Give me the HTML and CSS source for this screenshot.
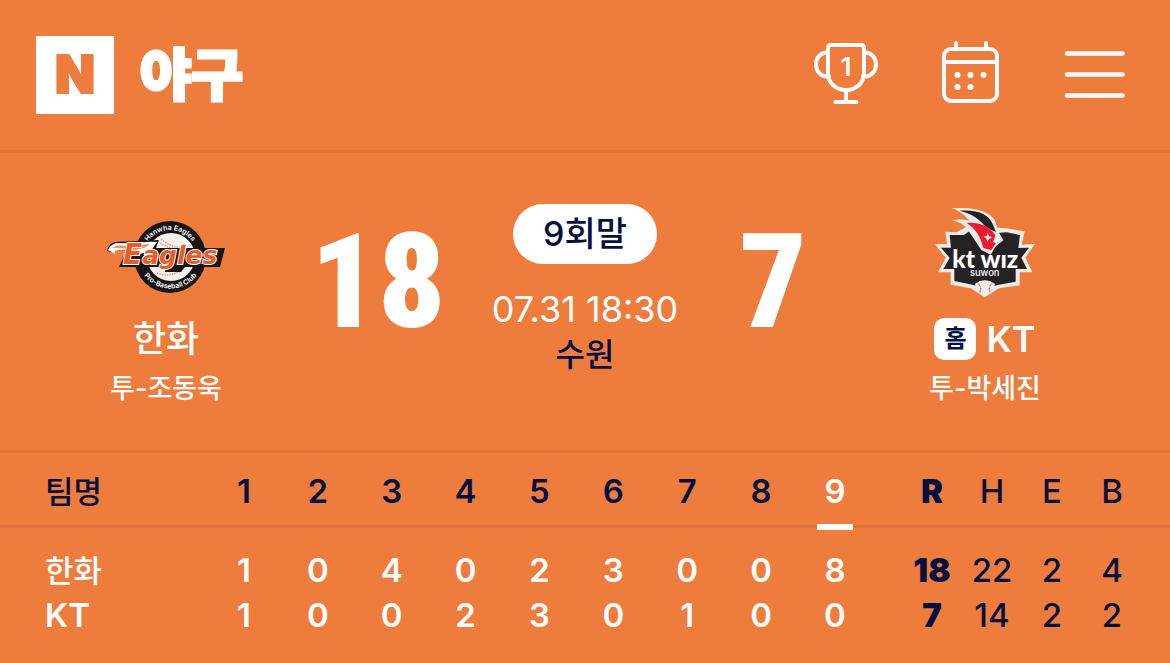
FILE: index.html
```html
<!DOCTYPE html>
<html lang="ko">
<head>
    <meta charset="UTF-8">
    <meta name="viewport" content="width=device-width, initial-scale=1.0">
    <title>야구</title>
    <link rel="stylesheet" href="styles.css">
</head>
<body>

<!-- Header -->
<header class="header">
    <a class="brand" href="#">
        <span class="brand-mark">N</span>
        <span class="brand-name">야구</span>
    </a>
    <nav class="header-menu">
        <button type="button" class="icon-btn" aria-label="순위">
            <svg width="64" height="64" viewBox="0 0 64 64" fill="none" stroke="#fff" stroke-width="4" stroke-linecap="round" stroke-linejoin="round">
                <path d="M14 8q0-3 3-3h30q3 0 3 3v25c0 10-8 17-18 17s-18-7-18-17z"/>
                <path d="M14 12.500h-1c-6 0-11 5-11 12s5 12 11 12h2M50 12.500h1c6 0 11 5 11 12s-5 12-11 12h-2M32 50v12M21.500 62h21"/>
                <text class="trophy-number" x="32" y="36" text-anchor="middle">1</text>
            </svg>
        </button>
        <button type="button" class="icon-btn" aria-label="일정">
            <svg width="64" height="64" viewBox="0 0 64 64" fill="none" stroke="#fff" stroke-width="4" stroke-linecap="round">
                <rect x="6" y="9" width="53" height="52" rx="7"/>
                <path d="M6 22h53M18 3v5M48 3v5"/>
                <g fill="#fff" stroke="none">
                    <circle cx="19.500" cy="35" r="3"/>
                    <circle cx="32.500" cy="35" r="3"/>
                    <circle cx="45.500" cy="35" r="3"/>
                    <circle cx="19.500" cy="47" r="3"/>
                    <circle cx="32.500" cy="47" r="3"/>
                </g>
            </svg>
        </button>
        <button type="button" class="icon-btn" aria-label="메뉴">
            <svg width="64" height="64" viewBox="0 0 64 64" stroke="#fff" stroke-width="4.500" stroke-linecap="round">
                <path d="M5 13.500h55.500M5 34.500h55.500M5 55.500h55.500"/>
            </svg>
        </button>
    </nav>
</header>

<main>
    <!-- Match summary -->
    <section class="match">
        <div class="team">
            <svg class="team-logo" viewBox="106 208 120 90" role="img" aria-label="Hanwha Eagles">
                <circle cx="170" cy="257" r="36" fill="#171415"/>
                <circle cx="171" cy="257" r="24" fill="#f6f1ec"/>
                <path d="M161 239q8 7 18 8M160 243q9 6 20 6M157 273q13 5 25-3" fill="none" stroke="#ed9a80" stroke-width="1.500" stroke-dasharray="1.500 1"/>
                <path id="arc-top" d="M143 257a27 27 0 0 1 54 0" fill="none"/>
                <path id="arc-bottom" d="M137 255a33.500 33.500 0 0 0 67 0" fill="none"/>
                <text class="logo-arc"><textPath href="#arc-top" startOffset="50%" text-anchor="middle">Hanwha Eagles</textPath></text>
                <text class="logo-arc"><textPath href="#arc-bottom" startOffset="50%" text-anchor="middle">Pro-Baseball Club</textPath></text>
                <path d="M107 251q1-7 8-9l44-2-3 8h69l-5 19h-35l-4 5h-16l1-5h-47l7-15q-3-4-7-5-6-1-8 1v4z" fill="#171415"/>
                <path d="M108 250q2-5 8-7 11 0 20 1 9-3 21-2l-6 9-18 5q-3-5-8-6-6-1-10 1v3z" fill="#fff"/>
                <path d="M112 248q6-4 12-2l26-2q-5 5-16 6l-8-1q-7-2-14-1z" fill="#f58a58"/>
                <text class="logo-eagles" x="123" y="264">E<tspan class="logo-agles">agles</tspan></text>
            </svg>
            <div class="team-name">한화</div>
            <div class="pitcher">투-조동욱</div>
        </div>

        <div class="score">18</div>

        <div class="status">
            <div class="inning">9회말</div>
            <div class="date">07.31 18:30</div>
            <div class="stadium">수원</div>
        </div>

        <div class="score">7</div>

        <div class="team">
            <svg class="team-logo" viewBox="18 25 360 270" role="img" aria-label="kt wiz suwon">
                <path d="M48 133l36 1-5-38 33 2 45-24 80 10 25 2 55 9-9 40 40-2-29 40 21 45h-38v39l-62 9-43 27-42-27-60-11v-37H57l23-43z" fill="#eeeae8"/>
                <path d="M66 144h30l-4-38h43l28-20 72 14 27-2 41 8-5 39 32-1-23 30 17 34h-34v38l-50 9-43 10-37-10-54-11v-36H73l19-33z" fill="#242222"/>
                <path d="M98 25c60-3 108 6 129 36l15 42 11 19-22 17-16 26-28-14-38-57c-14-20-29-28-51-32 20-3 37-3 53 1-17-20-32-30-53-38z" fill="#eeeae8"/>
                <path d="M122 33c60-3 88 13 100 42l9 22c-12-5-23-10-34-19-20-23-40-36-75-45z" fill="#242222"/>
                <path d="M143 70c35-3 69 9 86 37l-3 11 24 6-19 6-15 22-23-7c-8-34-24-59-50-75z" fill="#ed1b2f"/>
                <path d="M206 100l4 10 10 3-10 4-5 10-3-11-8-5 9-2z" fill="#fff"/>
                <path d="M228 116l22 8-19 6-10-3z" fill="#fff"/>
                <path d="M168 252q29-20 60 0-3 22-31 38-26-16-29-38z" fill="#f2eeec"/>
                <path d="M175 248q16 15 7 31M221 248q-16 15-7 31" fill="none" stroke="#d9505a" stroke-width="4" stroke-dasharray="3 2"/>
                <text class="logo-wiz" x="199" y="204" text-anchor="middle">kt wız</text>
                <text class="logo-city" x="197" y="228" text-anchor="middle">suwon</text>
            </svg>
            <div class="team-name"><span class="home-badge">홈</span><span class="latin">KT</span></div>
            <div class="pitcher">투-박세진</div>
        </div>
    </section>

    <!-- Score by inning -->
    <table class="scoreboard">
        <colgroup>
            <col class="col-team">
            <col span="9">
            <col class="col-run">
            <col class="col-stat" span="2">
            <col class="col-last">
        </colgroup>
        <thead>
        <tr>
            <th>팀명</th>
            <th>1</th>
            <th>2</th>
            <th>3</th>
            <th>4</th>
            <th>5</th>
            <th>6</th>
            <th>7</th>
            <th>8</th>
            <th class="current">9</th>
            <th class="run">R</th>
            <th class="stat">H</th>
            <th class="stat">E</th>
            <th class="stat last">B</th>
        </tr>
        </thead>
        <tbody>
        <tr>
            <th>한화</th>
            <td>1</td>
            <td>0</td>
            <td>4</td>
            <td>0</td>
            <td>2</td>
            <td>3</td>
            <td>0</td>
            <td>0</td>
            <td>8</td>
            <td class="run">18</td>
            <td class="stat">22</td>
            <td class="stat">2</td>
            <td class="stat last">4</td>
        </tr>
        <tr>
            <th class="latin">KT</th>
            <td>1</td>
            <td>0</td>
            <td>0</td>
            <td>2</td>
            <td>3</td>
            <td>0</td>
            <td>1</td>
            <td>0</td>
            <td>0</td>
            <td class="run">7</td>
            <td class="stat">14</td>
            <td class="stat">2</td>
            <td class="stat last">2</td>
        </tr>
        </tbody>
    </table>
</main>

</body>
</html>
```
FILE: styles.css
```css
/* styles.css */
* {
    box-sizing: border-box;
}

body {
    margin: 0;
    background-color: #ee7c3d;
    color: #fff;
    font-family: Inter, "Noto Sans CJK KR", sans-serif;
}

/* Header */
.header {
    display: flex;
    align-items: center;
    justify-content: space-between;
    padding: 36px 44px 36px 36px;
    border-bottom: 3px solid #de7238;
}

.brand {
    display: flex;
    align-items: flex-start;
    gap: 26px;
    color: #fff;
    text-decoration: none;
}

.brand-mark {
    width: 78px;
    height: 78px;
    background-color: #fff;
    color: #ee7c3d;
    font-size: 52px;
    font-weight: 900;
    line-height: 78px;
    text-align: center;
    -webkit-text-stroke: 2px #ee7c3d;
}

.brand-name {
    font-family: "Noto Sans CJK KR", sans-serif;
    font-size: 56px;
    font-weight: 900;
    line-height: 70px;
    -webkit-text-stroke: 3px #fff;
}

.header-menu {
    display: flex;
    gap: 60px;
    padding-bottom: 6px;
}

.icon-btn {
    padding: 0;
    border: none;
    background: none;
    cursor: pointer;
}

.icon-btn svg {
    display: block;
}

.trophy-number {
    fill: #fff;
    stroke: none;
    font-family: Inter, sans-serif;
    font-size: 26px;
    font-weight: 600;
}

/* Match summary */
.match {
    display: grid;
    grid-template-columns: minmax(0, 332fr) minmax(0, 92fr) minmax(0, 322fr) minmax(0, 54fr) minmax(0, 370fr);
    padding: 51px 0 38px;
    border-bottom: 3px solid #de7238;
}

.team {
    display: flex;
    flex-direction: column;
    align-items: center;
    padding-top: 4px;
}

.team-logo {
    width: 120px;
    height: 90px;
}

.logo-arc {
    fill: #fff;
    font-size: 7px;
    font-weight: 600;
}

.logo-eagles {
    fill: #ee5a24;
    stroke: #fff;
    stroke-width: 2px;
    paint-order: stroke;
    font-family: "DejaVu Sans", sans-serif;
    font-size: 28px;
    font-style: italic;
    font-weight: bold;
}

.logo-agles {
    font-size: 25px;
}

.logo-wiz {
    fill: #fff;
    font-family: Lato, sans-serif;
    font-size: 74px;
    font-weight: 900;
}

.logo-city {
    fill: #fff;
    font-size: 28px;
    font-weight: 500;
}

.team-name {
    display: flex;
    align-items: center;
    gap: 10px;
    margin-top: 20px;
    font-size: 36px;
    font-weight: 500;
    line-height: 42px;
}

.latin {
    font-weight: 600;
}

.home-badge {
    width: 42px;
    height: 42px;
    border-radius: 10px;
    background-color: #fff;
    color: #04103f;
    font-size: 24px;
    font-weight: 600;
    text-align: center;
}

.pitcher {
    margin-top: 6px;
    font-size: 27px;
    font-weight: 500;
    line-height: 46px;
}

.score {
    display: flex;
    align-items: center;
    justify-content: center;
    height: 156px;
    font-family: "Roboto Condensed", "Liberation Sans Narrow", sans-serif;
    font-size: 132px;
    font-weight: 900;
    line-height: 156px;
}

.status {
    display: flex;
    flex-direction: column;
    align-items: center;
}

.inning {
    padding: 0 30px;
    border-radius: 30px;
    background-color: #fff;
    color: #04103f;
    font-size: 34px;
    font-weight: 500;
    line-height: 60px;
}

.date {
    margin-top: 22px;
    font-size: 36px;
    font-weight: 400;
    line-height: 46px;
}

.stadium {
    color: #04103f;
    font-size: 32px;
    font-weight: 500;
    line-height: 46px;
}

/* Score by inning */
.scoreboard {
    width: 100%;
    table-layout: fixed;
    border-collapse: separate;
    border-spacing: 0;
    font-size: 33px;
}

.col-team {
    width: 207px;
}

.col-run {
    width: 90px;
}

.col-stat {
    width: 60px;
}

.col-last {
    width: 88px;
}

.scoreboard th,
.scoreboard td {
    padding: 0;
    font-weight: 600;
    line-height: 45px;
    text-align: center;
}

.scoreboard th:first-child {
    padding-left: 45px;
    font-size: 31px;
    font-weight: 500;
    text-align: left;
}

.scoreboard .latin:first-child {
    font-size: 33px;
    font-weight: 600;
}

.scoreboard thead th {
    padding-top: 16px;
    padding-bottom: 11px;
    border-bottom: 3px solid #de7238;
    color: #04103f;
}

.scoreboard thead .current {
    position: relative;
    color: #fff;
}

.current::after {
    content: "";
    position: absolute;
    bottom: -5px;
    left: calc(50% - 18px);
    width: 36px;
    height: 6px;
    background-color: #fff;
}

.scoreboard tbody tr:first-child > * {
    padding-top: 20px;
}

.scoreboard .run {
    padding-left: 30px;
    color: #04103f;
    font-weight: 900;
}

.scoreboard .stat {
    color: #04103f;
    font-weight: 500;
}

.scoreboard .last {
    padding-right: 28px;
}
```
